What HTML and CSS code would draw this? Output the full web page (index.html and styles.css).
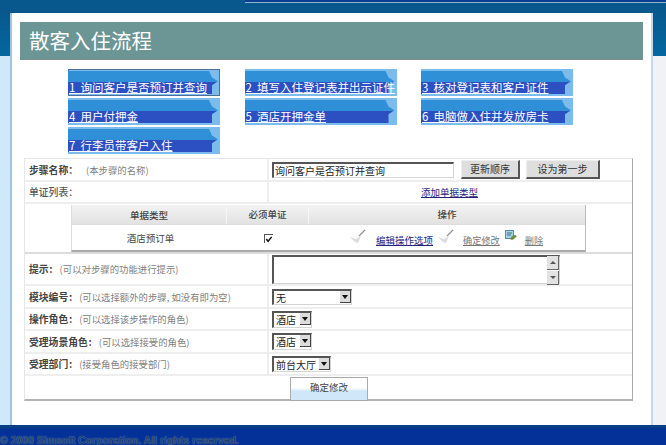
FILE: index.html
```html
<!DOCTYPE html>
<html lang="zh">
<head>
<meta charset="utf-8">
<title>散客入住流程</title>
<link rel="stylesheet" href="styles.css">
</head>
<body>
<div class="topbar"><div class="topline"></div></div>
<div class="shell">
  <div class="gutter left"></div>
  <main class="card">
    <h1 class="title">散客入住流程</h1>
    <div class="steps">
      <a class="step active"><span class="shape"></span><span class="label">1 &nbsp;询问客户是否预订并查询</span></a>
      <a class="step"><span class="shape"></span><span class="label">2 &nbsp;填写入住登记表并出示证件</span></a>
      <a class="step"><span class="shape"></span><span class="label">3 &nbsp;核对登记表和客户证件</span></a>
      <a class="step"><span class="shape"></span><span class="label">4 &nbsp;用户付押金</span></a>
      <a class="step"><span class="shape"></span><span class="label">5 &nbsp;酒店开押金单</span></a>
      <a class="step"><span class="shape"></span><span class="label">6 &nbsp;电脑做入住并发放房卡</span></a>
      <a class="step"><span class="shape"></span><span class="label">7 &nbsp;行李员带客户入住</span></a>
    </div>
    <section class="form">
      <div class="row r23">
        <div class="lab"><b>步骤名称：</b><i class="hint first">(本步骤的名称)</i></div>
        <div class="val name-val">
          <div class="field name-field">询问客户是否预订并查询</div>
          <div class="btn b1">更新顺序</div>
          <div class="btn b2">设为第一步</div>
        </div>
      </div>
      <div class="row r22">
        <div class="lab"><span class="plain">单证列表：</span></div>
        <div class="val center"><a class="link add">添加单据类型</a></div>
      </div>
      <div class="row-full">
        <div class="inner">
          <div class="ihead">
            <div class="c1">单据类型</div>
            <div class="c2">必须单证</div>
            <div class="c3">操作</div>
          </div>
          <div class="ibody">
            <div class="c1">酒店预订单</div>
            <div class="c2"><span class="check"><svg width="9" height="9" viewBox="0 0 9 9"><path d="M1.5 4l2 2.5L7.5 1.5" fill="none" stroke="#111" stroke-width="1.6"/></svg></span></div>
            <div class="c3 ops">
              <svg class="tick" width="16" height="15" viewBox="0 0 16 15"><path d="M0 8l5 5 3 1 3-7-5 3z" fill="#d9dddd"/><path d="M9 7l6-6" stroke="#8f9595" stroke-width="1.3"/></svg>
              <a class="link strong">编辑操作选项</a>
              <svg class="tick second" width="16" height="15" viewBox="0 0 16 15"><path d="M0 8l5 5 3 1 3-7-5 3z" fill="#d9dddd"/><path d="M9 7l6-6" stroke="#8f9595" stroke-width="1.3"/></svg>
              <a class="link faint confirm">确定修改</a>
              <svg class="edit" width="13" height="11" viewBox="0 0 13 11"><rect x="0.5" y="0.5" width="8" height="8" fill="#a9d3e6" stroke="#4f8fa8"/><path d="M2 3h5M2 5h4" stroke="#356f88"/><path d="M5 9l2-3 3-1 2 1-3 3-2 1z" fill="#6f8f3a"/></svg>
              <a class="link faint">删除</a>
            </div>
          </div>
        </div>
      </div>
      <div class="row r32">
        <div class="lab"><b>提示</b><span class="colon">：</span><i class="hint">(可以对步骤的功能进行提示)</i></div>
        <div class="val">
          <div class="field area"><span class="scroll"><span class="sb up"></span><span class="sb down"></span></span></div>
        </div>
      </div>
      <div class="row r23">
        <div class="lab"><b>模块编号</b><span class="colon">：</span><i class="hint">(可以选择额外的步骤, 如没有即为空)</i></div>
        <div class="val"><div class="field sel s80">无<span class="arrow"></span></div></div>
      </div>
      <div class="row r22">
        <div class="lab"><b>操作角色</b><span class="colon">：</span><i class="hint">(可以选择该步操作的角色)</i></div>
        <div class="val"><div class="field sel s40">酒店<span class="arrow"></span></div></div>
      </div>
      <div class="row r23">
        <div class="lab"><b>受理场景角色</b><span class="colon">：</span><i class="hint">(可以选择接受的角色)</i></div>
        <div class="val"><div class="field sel s40">酒店<span class="arrow"></span></div></div>
      </div>
      <div class="row r22">
        <div class="lab"><b>受理部门</b><span class="colon">：</span><i class="hint">(接受角色的接受部门)</i></div>
        <div class="val"><div class="field sel s59">前台大厅<span class="arrow"></span></div></div>
      </div>
      <div class="row-submit"><div class="submit">确定修改</div></div>
    </section>
  </main>
  <div class="gutter right"></div>
</div>
<footer class="footer">© 2000 Simsoft Corporation. All rights reserved.</footer>
</body>
</html>
```

FILE: styles.css
```css
* { box-sizing: border-box; }
html, body { margin: 0; padding: 0; }
body {
  width: 666px;
  height: 445px;
  overflow: hidden;
  display: flex;
  flex-direction: column;
  background: #fff;
  font-family: "Noto Sans CJK SC", "Liberation Sans", sans-serif;
  color: #333;
}
.topbar {
  height: 13px;
  flex: none;
  background: #08588e;
}
.topline {
  height: 3px;
  margin-left: 245px;
  background: #0c3f8f;
  border-bottom: 1px solid #8fb4d2;
}
.shell {
  flex: 1;
  display: flex;
  min-height: 0;
}
.gutter { flex: none; }
.gutter.left {
  width: 12px;
  background: linear-gradient(#08588e 0, #03689f 43px, #cdeafb 43px);
  border-right: 2px solid #9fc4de;
}
.gutter.right {
  width: 15px;
  background: linear-gradient(#08588e 0, #03689f 43px, #f0f2f5 43px);
  border-left: 2px solid #c3d8e8;
}
.card {
  width: 639px;
  background: #fff;
  border-radius: 7px 7px 0 0;
  padding: 9px 8px 0;
}
.title {
  margin: 0;
  height: 38px;
  padding-left: 9px;
  background: #6b9695;
  border-bottom: 1px solid #7f8e8d;
  color: #fff;
  font-family: "Noto Sans CJK SC", serif;
  font-weight: 400;
  font-size: 20.5px;
  line-height: 36px;
}
.steps {
  display: grid;
  grid-template-columns: repeat(3, 152px);
  grid-auto-rows: 27px;
  column-gap: 24.5px;
  row-gap: 2px;
  margin: 9px 0 0 48px;
  height: 89px;
}
.step {
  position: relative;
  display: block;
  background: #7cbcec;
  overflow: hidden;
}
.step.active { outline: 1px solid #4c6f99; outline-offset: -1px; }
.shape {
  position: absolute;
  inset: 2px 2px 2px 0;
  background: linear-gradient(#2f90d8 0, #2f90d8 11px, #2c4fc2 11px);
  clip-path: polygon(0 0, 94% 0, 96% 28%, 100% 45%, 96% 62%, 96% 100%, 0 100%);
}
.label {
  position: absolute;
  left: 1px;
  bottom: 2px;
  color: #fff;
  font-size: 11.5px;
  line-height: 14px;
  white-space: nowrap;
  text-decoration: underline;
  text-underline-offset: 1px;
}
.form {
  margin: 0 10px 0 4px;
  height: 243px;
  border: 1px solid #e6e6e6;
  border-right: 1px solid #a9a9a9;
  border-bottom: 2px solid #b4b4b4;
  font-size: 9.5px;
}
.row {
  display: flex;
  border-bottom: 2px solid #eeeeee;
}
.r22 { height: 22px; }
.r23 { height: 23px; }
.r32 { height: 32px; }
.lab {
  width: 244px;
  padding-left: 4px;
  display: flex;
  align-items: center;
  border-right: 2px solid #eeeeee;
  white-space: nowrap;
}
.lab b { font-weight: 700; color: #444; font-size: 9.8px; }
.colon { width: 7px; font-weight: 700; }
.plain { color: #555; font-weight: 500; font-size: 9.8px; }
.hint { font-style: normal; color: #808080; font-size: 9.4px; margin-left: 4px; }
.hint.first { margin-left: 8px; }
.val {
  flex: 1;
  display: flex;
  align-items: center;
  padding-left: 3px;
}
.val.center { justify-content: center; padding-right: 2px; padding-left: 0; }
.name-val { gap: 6px; }
.field {
  border: 1px solid #d4d4d4;
  border-top: 2px solid #555;
  border-left: 2px solid #555;
  background: #fff;
  color: #222;
  font-size: 10px;
  line-height: 13px;
  height: 16px;
  white-space: nowrap;
}
.name-field { width: 182px; padding-left: 1px; margin-right: 1px; }
.btn {
  height: 19px;
  background: #dedede;
  border: 1px solid #eee;
  border-right: 2px solid #555;
  border-bottom: 2px solid #555;
  text-align: center;
  color: #333;
  font-size: 10px;
  line-height: 15px;
}
.b1 { width: 59px; }
.b2 { width: 74px; }
.link { color: #23237f; text-decoration: underline; white-space: nowrap; }
.add { font-size: 9.5px; }
.row-full {
  height: 50px;
  border-bottom: 2px solid #dcdcdc;
  padding: 1px 0 0 46px;
}
.inner {
  width: 515px;
  height: 47px;
  border-right: 1px solid #bbb;
  border-bottom: 2px solid #aaa;
  border-left: 1px solid #ddd;
}
.ihead, .ibody { display: grid; grid-template-columns: 154px 82px 1fr; align-items: center; }
.ihead {
  height: 20px;
  background: linear-gradient(#f3f3f3, #e2e2e2);
  border-bottom: 1px solid #ddd;
  color: #444;
  font-weight: 500;
  font-size: 9.5px;
  text-align: center;
}
.ihead .c2, .ihead .c3 { border-left: 1px solid #f6f6f6; line-height: 19px; }
.ibody { height: 25px; text-align: center; font-size: 9.5px; color: #444; }
.ibody .c1 { padding-left: 3px; }
.ibody .c2 { padding-left: 2px; }
.check {
  display: inline-flex;
  width: 9px;
  height: 9px;
  border-top: 1px solid #555;
  border-left: 1px solid #555;
  vertical-align: middle;
}
.ops {
  display: flex;
  align-items: center;
  padding-left: 42px;
}
.strong { font-size: 9.5px; margin: 5px 0 0 10px; }
.faint { color: #777; font-size: 9.2px; margin-top: 5px; }
.tick { margin-bottom: 3px; }
.second { margin-left: 5px; }
.confirm { margin-left: 9px; }
.edit { margin: 0 7px 4px 5px; }
.area {
  position: relative;
  width: 288px;
  height: 29px;
}
.scroll {
  position: absolute;
  top: -1px;
  right: 0;
  width: 12px;
  height: 29px;
  display: flex;
  flex-direction: column;
  justify-content: space-between;
}
.sb {
  display: block;
  height: 14px;
  background: #e2e2e2;
  border-right: 1px solid #666;
  border-bottom: 1px solid #666;
  position: relative;
}
.sb::after {
  content: "";
  position: absolute;
  left: 3px;
  border-left: 3px solid transparent;
  border-right: 3px solid transparent;
}
.up::after { top: 5px; border-bottom: 3px solid #555; }
.down::after { top: 5px; border-top: 3px solid #555; }
.sel {
  position: relative;
  padding-left: 2px;
}
.s80 { width: 80px; }
.s40 { width: 40px; height: 17px; }
.s59 { width: 59px; }
.arrow {
  position: absolute;
  top: 0;
  right: 0;
  width: 11px;
  height: 12px;
  background: #dcdcdc;
  border-right: 1px solid #444;
  border-bottom: 1px solid #444;
}
.arrow::after {
  content: "";
  position: absolute;
  left: 2px;
  top: 4px;
  border-left: 3.5px solid transparent;
  border-right: 3.5px solid transparent;
  border-top: 4px solid #111;
}
.row-submit {
  padding: 1px 0 0 265px;
}
.submit {
  width: 78px;
  height: 24px;
  border: 1px solid #aaa;
  background: linear-gradient(#fff 0, #fff 45%, #cfe7f8 60%, #cfe7f8 100%);
  text-align: center;
  color: #444;
  font-size: 9.5px;
  line-height: 19px;
}
.footer {
  flex: none;
  height: 20px;
  margin: 0;
  background: linear-gradient(#0a3f86 0, #0a3f86 3px, #033198 4px);
  padding: 8px 0 0 0;
  color: #1a3f6e;
  font-size: 10.5px;
  font-weight: 700;
  line-height: 14px;
  font-family: "Liberation Sans", sans-serif;
  text-shadow: 0 0 1px #8aa6c8;
  white-space: nowrap;
  overflow: hidden;
}
```
